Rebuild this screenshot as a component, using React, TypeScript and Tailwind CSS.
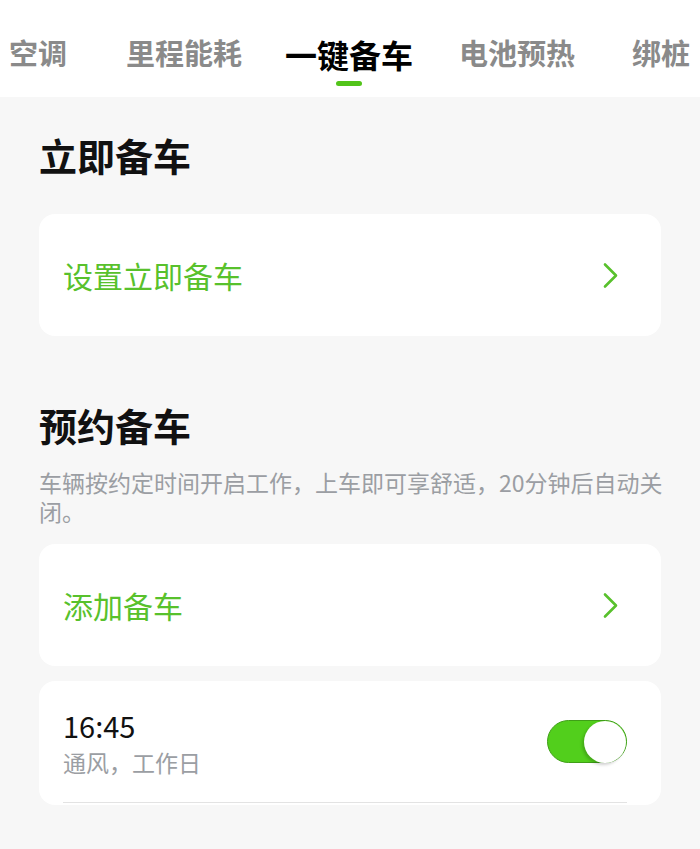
import React from "react";

const font = { fontFamily: '"Noto Sans CJK SC", "Noto Sans", sans-serif' };

const tabs = [
  { label: "空调", ml: "ml-[9px]", w: "w-[58px]" },
  { label: "里程能耗", ml: "ml-[59px]", w: "w-[116px]" },
  { label: "一键备车", ml: "ml-[43px]", w: "w-[128px]", active: true },
  { label: "电池预热", ml: "ml-[46px]", w: "w-[116px]" },
  { label: "绑桩", ml: "ml-[57px]", w: "w-[58px]" },
];

function Chevron() {
  return (
    <svg width="17" height="27" viewBox="0 0 17 27" fill="none">
      <path d="M3 2.5 L14 13.5 L3 24.5" stroke="#58c12c" strokeWidth="2.6" strokeLinecap="round" strokeLinejoin="round" />
    </svg>
  );
}

function LinkCard({ label, mt }: { label: string; mt: string }) {
  return (
    <div className={`${mt} h-[122px] rounded-[16px] bg-white pl-[24px] pr-[42px] flex items-center justify-between`}>
      <span className="text-[30px] leading-[30px] text-[#58c12c]">{label}</span>
      <Chevron />
    </div>
  );
}

export default function App() {
  return (
    <div style={font} className="w-[700px] h-[849px] overflow-hidden bg-[#f7f7f7]">
      <div className="h-[97px] bg-white flex items-start pt-[38px] whitespace-nowrap overflow-hidden">
        {tabs.map((t) =>
          t.active ? (
            <div key={t.label} className={`${t.ml} ${t.w} shrink-0 flex flex-col items-center`}>
              <span className="text-[32px] leading-[32px] font-bold text-black">{t.label}</span>
              <span className="mt-[11px] h-[5px] w-[26px] rounded-full bg-[#52c41a]" />
            </div>
          ) : (
            <span key={t.label} className={`${t.ml} ${t.w} shrink-0 text-[29px] leading-[29px] font-bold text-[#8a8a8a]`}>
              {t.label}
            </span>
          )
        )}
      </div>

      <div className="px-[39px]">
        <h2 className="mt-[39px] text-[38px] leading-[38px] font-bold text-[#111]">立即备车</h2>
        <LinkCard label="设置立即备车" mt="mt-[40px]" />

        <h2 className="mt-[70px] text-[38px] leading-[38px] font-bold text-[#111]">预约备车</h2>
        <p className="mt-[24px] w-[640px] text-[23px] leading-[29px] text-[#9b9ea3]">
          车辆按约定时间开启工作，上车即可享舒适，20分钟后自动关闭。
        </p>

        <LinkCard label="添加备车" mt="mt-[18px]" />

        <div className="mt-[15px] rounded-[16px] bg-white pl-[24px] pr-[34px] pb-[2px]">
          <div className="h-[122px] flex items-center justify-between border-b border-[#e3e3e3]">
            <div className="flex flex-col">
              <span className="text-[29px] leading-[34px] text-[#111]">16:45</span>
              <span className="mt-[6px] text-[23px] leading-[28px] text-[#9b9ea3]">通风，工作日</span>
            </div>
            <div className="w-[80px] h-[43px] rounded-full bg-[#52cf1c] border border-[#3f9f17] flex items-center justify-end">
              <span className="w-[42px] h-[42px] rounded-full bg-white shadow-[-2px_2px_3px_rgba(0,0,0,0.18)]" />
            </div>
          </div>
        </div>
      </div>
    </div>
  );
}
